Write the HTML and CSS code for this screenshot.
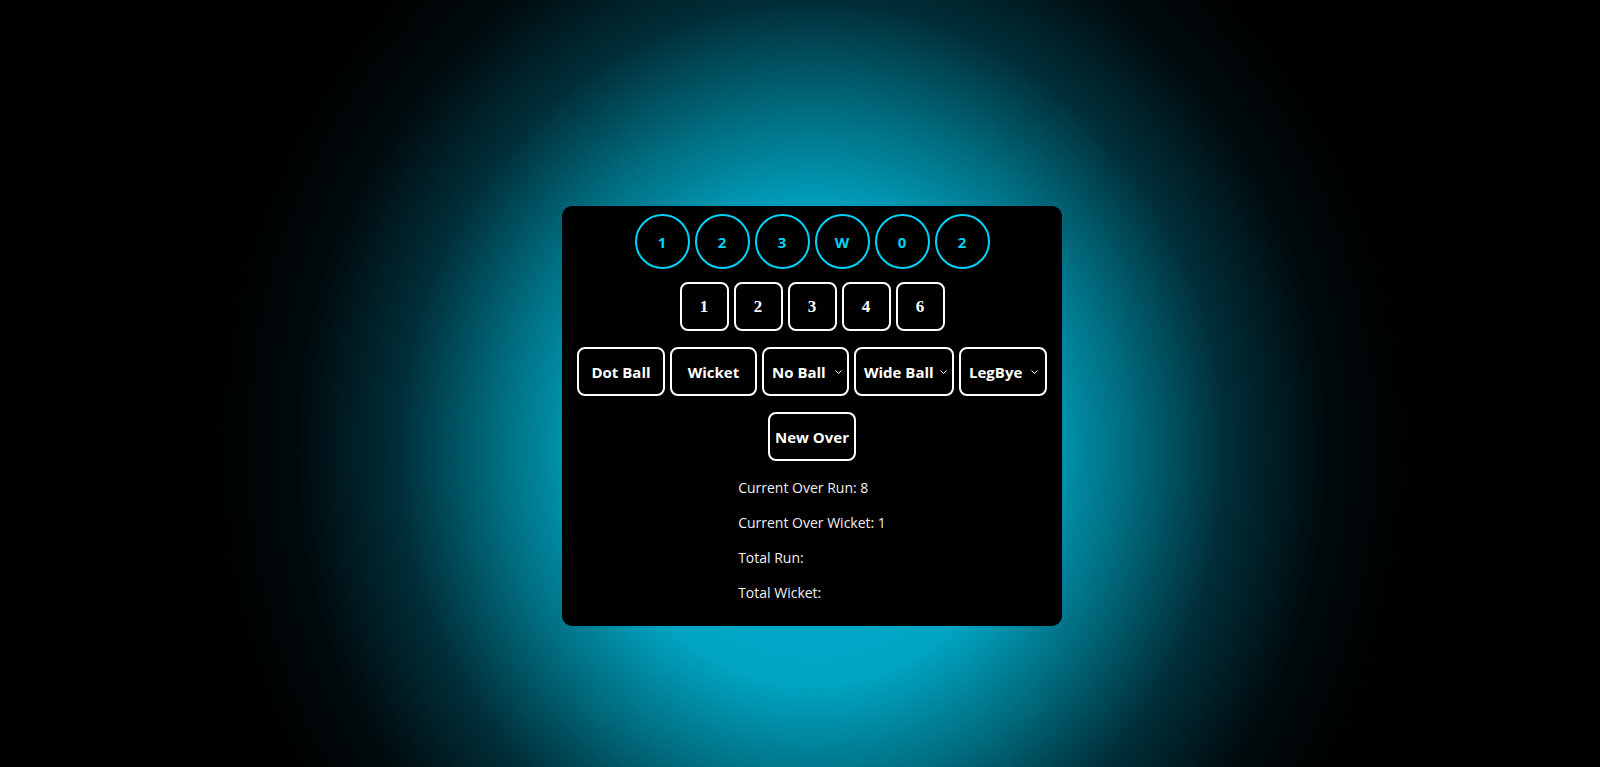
FILE: index.html
```html
<!DOCTYPE html>
<html lang="en">
<head>
<meta charset="utf-8">
<title>Cricket Scorer</title>
<link rel="stylesheet" href="styles.css">
</head>
<body>
<div class="stage">
  <div class="card">
    <div class="row balls">
      <div class="ball">1</div>
      <div class="ball">2</div>
      <div class="ball">3</div>
      <div class="ball">W</div>
      <div class="ball">0</div>
      <div class="ball">2</div>
    </div>
    <div class="row runs">
      <button class="run">1</button>
      <button class="run">2</button>
      <button class="run">3</button>
      <button class="run">4</button>
      <button class="run">6</button>
    </div>
    <div class="row actions">
      <button class="btn w-dot">Dot Ball</button>
      <button class="btn w-wicket">Wicket</button>
      <button class="btn sel w-noball"><span>No Ball</span><svg class="chev" viewBox="0 0 7 4" width="7" height="4"><path d="M0.5 0.5 L3.5 3.5 L6.5 0.5" fill="none" stroke="#fff" stroke-width="1"/></svg></button>
      <button class="btn sel w-wide"><span>Wide Ball</span><svg class="chev" viewBox="0 0 7 4" width="7" height="4"><path d="M0.5 0.5 L3.5 3.5 L6.5 0.5" fill="none" stroke="#fff" stroke-width="1"/></svg></button>
      <button class="btn sel w-legbye"><span>LegBye</span><svg class="chev" viewBox="0 0 7 4" width="7" height="4"><path d="M0.5 0.5 L3.5 3.5 L6.5 0.5" fill="none" stroke="#fff" stroke-width="1"/></svg></button>
    </div>
    <div class="row newover">
      <button class="btn w-new">New Over</button>
    </div>
    <div class="stats">
      <div class="stats-inner">
        <p>Current Over Run: 8</p>
        <p>Current Over Wicket: 1</p>
        <p>Total Run: </p>
        <p>Total Wicket: </p>
      </div>
    </div>
  </div>
</div>
</body>
</html>
```

FILE: styles.css
```css
* { box-sizing: border-box; }

html, body {
  margin: 0;
  height: 100%;
}

body {
  background: radial-gradient(ellipse 600px 650px at 812px 450px,
    #00b4d8 0%,
    #00a4c2 36%,
    #006a7c 53%,
    #002e38 69%,
    #000a0d 86%,
    #000 100%);
  background-color: #000;
  font-family: "Open Sans", "Noto Sans", sans-serif;
  overflow: hidden;
}

.stage {
  display: flex;
  justify-content: center;
  padding-top: 206px;
  padding-left: 24px;
}

.card {
  width: 500px;
  background: #000;
  border-radius: 10px;
  padding: 8px 0 9px;
  display: flex;
  flex-direction: column;
  align-items: center;
}

.row {
  display: flex;
  justify-content: center;
  gap: 5px;
}

.ball {
  width: 55px;
  height: 55px;
  border: 2px solid #00d2f7;
  border-radius: 50%;
  color: #00d2f7;
  display: flex;
  align-items: center;
  justify-content: center;
  font-weight: 700;
  font-size: 15px;
}

.runs { margin-top: 13px; }

.run {
  width: 49px;
  height: 49px;
  border: 2px solid #fff;
  border-radius: 8px;
  background: #000;
  color: #fff;
  font-family: "Liberation Serif", "Times New Roman", serif;
  font-weight: 700;
  font-size: 17px;
  padding: 0;
}

.actions { margin-top: 16px; }
.newover { margin-top: 16px; }

.btn {
  height: 49px;
  border: 2px solid #fff;
  border-radius: 8px;
  background: #000;
  color: #fff;
  font-family: "Open Sans", "Noto Sans", sans-serif;
  font-weight: 700;
  font-size: 15px;
  padding: 0;
  display: flex;
  align-items: center;
  justify-content: center;
}

.sel {
  justify-content: space-between;
  padding: 0 5px 0 8px;
}

.chev { display: block; margin-top: 1px; }

.w-dot { width: 88px; }
.w-wicket { width: 87px; }
.w-noball { width: 87px; }
.w-wide { width: 100px; }
.w-legbye { width: 88px; padding-right: 7px; }
.w-new { width: 88px; }

.stats {
  margin-top: 2px;
  display: flex;
  justify-content: center;
  width: 100%;
}

.stats-inner p {
  margin: 14px 0;
  font-size: 14px;
  line-height: 21px;
  color: #f0f0f0;
}
```
